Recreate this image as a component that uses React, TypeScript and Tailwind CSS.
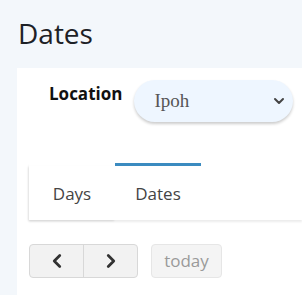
import { ChevronDown, ChevronLeft, ChevronRight } from 'lucide-react';

export default function App() {
  return (
    <div className="min-h-[295px] bg-[#f3f7fb] pt-[14px] font-['Open_Sans',sans-serif] overflow-hidden">
      <h1 className="pl-[18px] text-[28px] leading-[38px] font-medium text-[#1d2126]">Dates</h1>

      <div className="ml-[17px] mt-[16px] h-[240px] bg-white">
        {/* Location picker */}
        <div className="flex items-start pt-[12px] pl-[32px]">
          <label className="mt-[2px] text-[17px] font-bold leading-[24px] text-[#111]">Location</label>
          <div className="relative ml-[12px] h-[42px] w-[159px] rounded-full bg-[#eef6ff] shadow-[0_2px_3px_rgba(0,0,0,0.2)]">
            <span className="absolute left-[20px] top-[9px] font-['Liberation_Serif',serif] text-[19px] leading-[24px] text-[#555]">
              Ipoh
            </span>
            <ChevronDown className="absolute right-[6px] top-[13px] h-[16px] w-[16px] text-[#444]" strokeWidth={3} />
          </div>
        </div>

        {/* Tabs */}
        <div className="mt-[41px] ml-[12px] flex items-end shadow-[0_2px_2px_rgba(0,0,0,0.08)]">
          <div className="flex h-[54px] w-[86px] items-center justify-center bg-white pt-[2px] text-[17px] text-[#444] shadow-[-1px_1px_2px_rgba(0,0,0,0.1)]">
            Days
          </div>
          <div className="relative z-10 flex h-[57px] w-[86px] items-center justify-center border-t-[3px] border-[#3b8bc0] bg-white pt-[2px] text-[17px] text-[#444]">
            Dates
          </div>
          <div className="flex-1" />
        </div>

        {/* Navigation */}
        <div className="mt-[24px] ml-[12px] flex items-center gap-[13px]">
          <div className="flex h-[34px] overflow-hidden rounded-[4px] border border-[#d8d8d8] bg-[#f2f2f2]">
            <button className="flex w-[54px] items-center justify-center border-r border-[#d8d8d8] text-[#333]">
              <ChevronLeft className="h-[22px] w-[22px]" strokeWidth={3} />
            </button>
            <button className="flex w-[53px] items-center justify-center text-[#333]">
              <ChevronRight className="h-[22px] w-[22px]" strokeWidth={3} />
            </button>
          </div>
          <button className="h-[34px] w-[71px] rounded-[4px] border border-[#e6e6e6] bg-[#f4f4f4] text-[17px] text-[#9a9a9a]">
            today
          </button>
        </div>
      </div>
    </div>
  );
}
